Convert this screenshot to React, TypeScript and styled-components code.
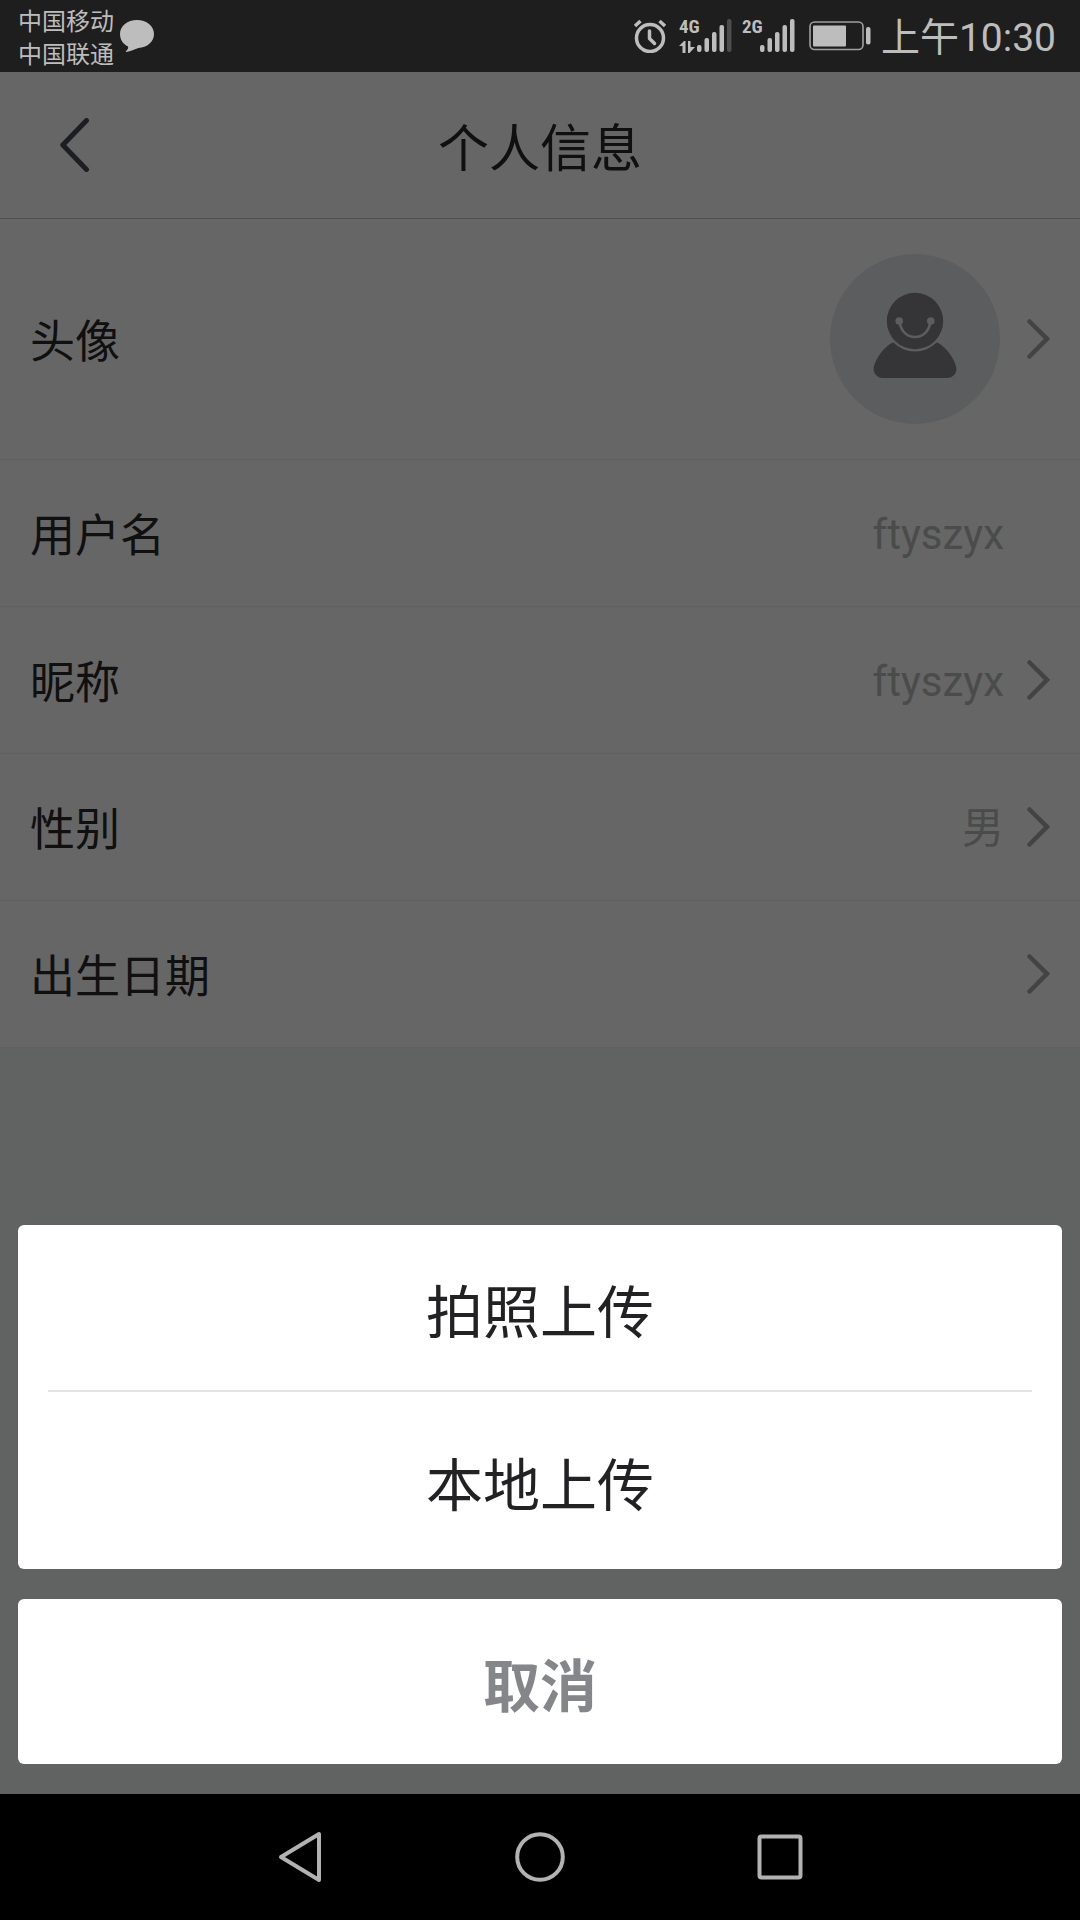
import React from "react";
import styled, { createGlobalStyle } from "styled-components";

const GlobalStyle = createGlobalStyle`
  *, *::before, *::after { box-sizing: border-box; }
  body {
    margin: 0;
    background: #000;
    font-family: "Noto Sans CJK SC", sans-serif;
  }
  button {
    margin: 0;
    padding: 0;
    border: 0;
    background: none;
    color: inherit;
    font: inherit;
    cursor: pointer;
  }
  svg { display: block; flex: none; }
`;

const Screen = styled.div`
  display: flex;
  flex-direction: column;
  min-height: 100vh;
`;

const StatusBar = styled.div`
  display: flex;
  align-items: center;
  justify-content: space-between;
  height: 72px;
  padding: 0 24px 0 18px;
  background: #1e1e1e;
  color: #bdbdbd;
`;

const StatusGroup = styled.div<{ $gap: number }>`
  display: flex;
  align-items: center;
  gap: ${(p) => p.$gap}px;
`;

const Carriers = styled.div`
  display: flex;
  flex-direction: column;
  font-size: 24px;
  line-height: 33px;
`;

const Signal = styled.div`
  display: grid;
  grid-template-columns: 18px auto;
  height: 34px;
`;

const NetworkSide = styled.div`
  display: flex;
  flex-direction: column;
  justify-content: space-between;
`;

const NetworkLabel = styled.span`
  font-family: "Roboto Condensed", "Liberation Sans Narrow", Roboto, sans-serif;
  font-size: 19px;
  font-weight: 700;
  line-height: 16px;
`;

const Clock = styled.time`
  padding-top: 4px;
  font-family: Roboto, "Noto Sans CJK SC", sans-serif;
  font-size: 39px;
  line-height: 48px;
`;

const Stage = styled.div`
  position: relative;
  flex: 1;
  display: flex;
  flex-direction: column;
  background: #f2f8f5;
`;

const Header = styled.header`
  display: grid;
  grid-template-columns: 120px 1fr 120px;
  align-items: center;
  height: 147px;
  border-bottom: 1px solid #c8c8c8;
  background: #fff;
`;

const BackButton = styled.button`
  display: flex;
  align-items: center;
  height: 100%;
  padding-left: 60px;
`;

const Title = styled.h1`
  margin: 0;
  color: #282828;
  font-size: 51px;
  font-weight: 400;
  line-height: 60px;
  text-align: center;
`;

const List = styled.ul`
  margin: 0;
  padding: 0;
  list-style: none;
  background: #fff;
`;

const Item = styled.li`
  border-bottom: 1px solid #efefef;
`;

const Row = styled.button<{ $tall?: boolean }>`
  display: flex;
  align-items: center;
  justify-content: space-between;
  width: 100%;
  height: ${(p) => (p.$tall ? 240 : 146)}px;
  padding: 0 30px;
`;

const Label = styled.span`
  color: #282828;
  font-size: 45px;
  line-height: 54px;
`;

const Trailing = styled.span<{ $gap: number }>`
  display: flex;
  align-items: center;
  gap: ${(p) => p.$gap}px;
`;

const Value = styled.span`
  padding-top: 4px;
  color: #b9bdbb;
  font-family: Roboto, "Noto Sans CJK SC", sans-serif;
  font-size: 42px;
  line-height: 54px;
`;

const ChevronSlot = styled.span`
  width: 23px;
`;

const Overlay = styled.div`
  position: absolute;
  inset: 0;
  display: flex;
  flex-direction: column;
  justify-content: flex-end;
  gap: 30px;
  padding: 30px 18px;
  background: rgba(0, 0, 0, 0.6);
`;

const Card = styled.div`
  display: flex;
  flex-direction: column;
  border-radius: 6px;
  background: #fff;
`;

const Divider = styled.hr`
  width: auto;
  height: 2px;
  margin: 0 30px;
  border: 0;
  background: #e4e4e9;
`;

const SheetButton = styled.button<{ $height: number; $cancel?: boolean }>`
  height: ${(p) => p.$height}px;
  color: ${(p) => (p.$cancel ? "#858689" : "#222224")};
  font-size: 57px;
  font-weight: ${(p) => (p.$cancel ? 700 : 400)};
  line-height: 66px;
`;

const NavBar = styled.nav`
  display: grid;
  grid-template-columns: repeat(3, 1fr);
  height: 126px;
  padding: 0 calc(100% / 6);
  background: #000;
`;

const NavButton = styled.button`
  display: flex;
  align-items: center;
  justify-content: center;
`;

const BubbleIcon = () => (
  <svg width="34" height="32" viewBox="0 0 34 32" fill="#bdbdbd" aria-hidden="true">
    <path d="M17 0C26.5 0 34 6 34 14S27 27.500 18.500 28C14.500 29 11 31.500 6 32C5.500 31.500 6 31 6.500 30.500C8 29 8.500 28 8 26.500C3 24 0 19.500 0 14C0 6 7.500 0 17 0Z" />
  </svg>
);

const AlarmIcon = () => (
  <svg width="36" height="34" viewBox="0 0 36 34" fill="none" stroke="#bdbdbd" strokeLinecap="round" aria-hidden="true">
    <circle cx="17" cy="19" r="13.500" strokeWidth="3.500" />
    <path d="M16.500 12v7.500l5 5" strokeWidth="3.500" strokeLinejoin="round" />
    <path d="M2 7l5.500-5M32 7l-5.500-5" strokeWidth="3.500" strokeLinecap="butt" />
  </svg>
);

const DataArrows = () => (
  <svg width="16" height="12" viewBox="0 0 16 12" fill="#bdbdbd" aria-hidden="true">
    <path d="M3.500 12V5H0L5 0H6.500V12ZM9 0H11.500V6H16L10.500 12H9Z" />
  </svg>
);

const barHeights = [7, 14, 20, 27, 33];

const SignalBars = ({ level }: { level: number }) => (
  <svg width="35" height="34" viewBox="0 0 35 34" aria-hidden="true">
    {barHeights.map((h, i) => (
      <rect
        key={h}
        x={i * 7.5}
        y={33 - h}
        width="4.500"
        height={h}
        rx="2"
        fill={i < level ? "#bdbdbd" : "#4c4c4c"}
      />
    ))}
  </svg>
);

const BatteryIcon = () => (
  <svg width="66" height="30" viewBox="-4 0 66 30" aria-hidden="true">
    <rect x="1" y="1" width="53" height="27.500" rx="4.500" fill="none" stroke="#a0a0a0" strokeWidth="1.600" />
    <rect x="4" y="4.500" width="33" height="21" rx="1" fill="#bdbdbd" />
    <rect x="57" y="6" width="4.500" height="17.500" rx="2" fill="#bdbdbd" />
  </svg>
);

const BackIcon = () => (
  <svg width="30" height="54" viewBox="0 0 30 54" fill="none" stroke="#484d59" strokeWidth="5" strokeLinecap="round" strokeLinejoin="round" aria-hidden="true">
    <path d="M26.500 2.500L2.800 27l23.700 24.500" />
  </svg>
);

const Chevron = () => (
  <svg width="23" height="40" viewBox="0 0 23 40" fill="none" stroke="#a8a8a8" strokeWidth="4.500" strokeLinecap="round" aria-hidden="true">
    <path d="M2.500 2.500L20 19.800L2.500 37.500" />
  </svg>
);

const Avatar = () => (
  <svg width="170" height="170" viewBox="0 0 170 170" role="img" aria-label="头像">
    <circle cx="85" cy="85" r="85" fill="#e4e9ed" />
    <path d="M62.500 88.500H107.500C117 94 124.500 105 126.200 113C127.500 119 123 124 117 124H53C47 124 42.500 119 43.800 113C45.500 105 53 94 62.500 88.500Z" fill="#84828b" />
    <circle cx="85" cy="67" r="30.500" fill="#e4e9ed" />
    <circle cx="85" cy="67" r="28.200" fill="#84828b" />
    <circle cx="69.200" cy="67" r="3.800" fill="#e4e9ed" />
    <circle cx="100.800" cy="67" r="3.800" fill="#e4e9ed" />
    <path d="M69.800 69C71.500 78 77.500 83 85 83S98.500 78 100.200 69" fill="none" stroke="#e4e9ed" strokeWidth="2.600" />
  </svg>
);

interface Field {
  label: string;
  value?: string;
  editable: boolean;
}

const fields: Field[] = [
  { label: "用户名", value: "ftyszyx", editable: false },
  { label: "昵称", value: "ftyszyx", editable: true },
  { label: "性别", value: "男", editable: true },
  { label: "出生日期", editable: true },
];

export default function App() {
  return (
    <Screen>
      <GlobalStyle />
      <StatusBar>
        <StatusGroup $gap={6}>
          <Carriers>
            <span>中国移动</span>
            <span>中国联通</span>
          </Carriers>
          <BubbleIcon />
        </StatusGroup>
        <StatusGroup $gap={10}>
          <AlarmIcon />
          <Signal>
            <NetworkSide>
              <NetworkLabel>4G</NetworkLabel>
              <DataArrows />
            </NetworkSide>
            <SignalBars level={4} />
          </Signal>
          <Signal>
            <NetworkSide>
              <NetworkLabel>2G</NetworkLabel>
            </NetworkSide>
            <SignalBars level={5} />
          </Signal>
          <BatteryIcon />
          <Clock>上午10:30</Clock>
        </StatusGroup>
      </StatusBar>

      <Stage>
        <Header>
          <BackButton type="button" aria-label="返回">
            <BackIcon />
          </BackButton>
          <Title>个人信息</Title>
        </Header>
        <List>
          <Item>
            <Row type="button" $tall>
              <Label>头像</Label>
              <Trailing $gap={27}>
                <Avatar />
                <Chevron />
              </Trailing>
            </Row>
          </Item>
          {fields.map((field) => (
            <Item key={field.label}>
              <Row type="button" disabled={!field.editable}>
                <Label>{field.label}</Label>
                <Trailing $gap={23}>
                  {field.value && <Value>{field.value}</Value>}
                  {field.editable ? <Chevron /> : <ChevronSlot />}
                </Trailing>
              </Row>
            </Item>
          ))}
        </List>

        <Overlay role="dialog" aria-modal="true" aria-label="头像">
          <Card>
            <SheetButton type="button" $height={165}>拍照上传</SheetButton>
            <Divider />
            <SheetButton type="button" $height={177}>本地上传</SheetButton>
          </Card>
          <Card>
            <SheetButton type="button" $height={165} $cancel>取消</SheetButton>
          </Card>
        </Overlay>
      </Stage>

      <NavBar>
        <NavButton type="button" aria-label="后退">
          <svg width="44" height="52" viewBox="0 0 44 52" fill="none" stroke="#b2b2b2" strokeWidth="4" strokeLinejoin="round" aria-hidden="true">
            <path d="M41 3V49L3 26Z" />
          </svg>
        </NavButton>
        <NavButton type="button" aria-label="主屏幕">
          <svg width="50" height="50" viewBox="0 0 50 50" fill="none" stroke="#b2b2b2" strokeWidth="4" aria-hidden="true">
            <circle cx="25" cy="25" r="22.800" />
          </svg>
        </NavButton>
        <NavButton type="button" aria-label="最近任务">
          <svg width="46" height="46" viewBox="0 0 46 46" fill="none" stroke="#b2b2b2" strokeWidth="4" aria-hidden="true">
            <rect x="2.500" y="2.500" width="41" height="41" rx="2" />
          </svg>
        </NavButton>
      </NavBar>
    </Screen>
  );
}
